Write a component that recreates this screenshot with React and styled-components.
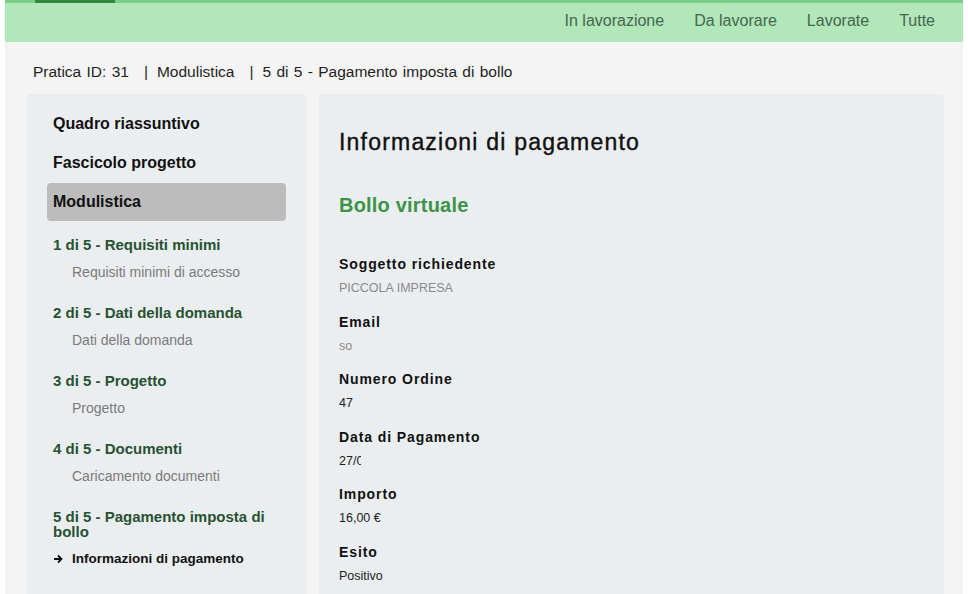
import React from "react";
import styled, { createGlobalStyle } from "styled-components";

const GlobalStyle = createGlobalStyle`
  html, body {
    margin: 0;
    padding: 0;
    background: #fff;
  }
  body {
    font-family: "Liberation Sans", Arial, sans-serif;
    color: #1d1d1d;
  }
`;

const Page = styled.div`
  margin: 0 5px;
  min-height: 100vh;
  background: #f4f4f4;
`;

const Header = styled.header`
  position: relative;
  height: 39px;
  border-top: 3px solid #79d089;
  background: #b1e7b9;
  display: flex;
  align-items: center;
  justify-content: flex-end;
  gap: 30px;
  padding-right: 28px;

  &::before {
    content: "";
    position: absolute;
    top: -3px;
    left: 30px;
    width: 80px;
    height: 3px;
    background: #2f8a3d;
  }
`;

const NavLink = styled.a`
  font-size: 16px;
  color: #466650;
  text-decoration: none;
  cursor: pointer;
  margin-top: -3px;
`;

const Breadcrumb = styled.div`
  padding: 21px 28px 13px;
  font-size: 15.5px;
  color: #1f1f1f;
  display: flex;
  line-height: 18px;
  word-spacing: 1px;

  span + span::before {
    content: "|";
    margin: 0 9px 0 15px;
  }
`;

const Layout = styled.div`
  display: grid;
  grid-template-columns: 279px 625px;
  gap: 13px;
  padding-left: 22px;
  align-items: start;
`;

const Card = styled.div`
  background: #ebeef0;
  border-radius: 4px 4px 0 0;
  min-height: 520px;
`;

const Sidebar = styled(Card)`
  padding: 11px 20px 30px 20px;
`;

const TopItem = styled.div`
  font-size: 16px;
  font-weight: 700;
  color: #111;
  height: 38px;
  line-height: 38px;
  padding: 0 6px;
  border-radius: 4px;
  margin-bottom: 1px;
  background: ${(p) => (p.$active ? "#bcbcbc" : "transparent")};
`;

const Step = styled.div`
  margin-top: ${(p) => (p.$first ? "16px" : "25px")};
  padding: 0 6px;
`;

const StepTitle = styled.div`
  font-size: 15px;
  font-weight: 700;
  color: #275232;
  line-height: 15px;
  padding-right: 8px;
`;

const StepSub = styled.div`
  font-size: 14px;
  color: #7a7a7a;
  margin-top: 13px;
  padding-left: 19px;
  line-height: 15px;
`;

const CurrentSub = styled.div`
  font-size: 13.5px;
  font-weight: 700;
  color: #111;
  margin-top: 12px;
  line-height: 15px;
  display: flex;
  align-items: center;
  gap: 9px;
`;

const Main = styled(Card)`
  padding: 30px 20px 30px 20px;
`;

const Title = styled.h1`
  margin: 0;
  font-size: 23px;
  font-weight: 400;
  color: #111;
  line-height: 36px;
  letter-spacing: 1.2px;
  -webkit-text-stroke: 0.4px #111;
`;

const Subtitle = styled.h2`
  margin: 32px 0 0;
  font-size: 20px;
  font-weight: 700;
  color: #3d9348;
  line-height: 26px;
  letter-spacing: 0.2px;
`;

const Fields = styled.div`
  margin-top: 37px;
  display: flex;
  flex-direction: column;
  gap: 14.5px;
`;

const Field = styled.div`
  display: flex;
  flex-direction: column;
  gap: 6px;
`;

const Label = styled.div`
  font-size: 14px;
  font-weight: 700;
  color: #111;
  line-height: 18px;
  letter-spacing: 0.9px;
`;

const Value = styled.div`
  font-size: 12.5px;
  line-height: 19px;
  color: ${(p) => (p.$muted ? "#8a8a8a" : "#222")};
  max-width: ${(p) => p.$clip || "none"};
  overflow: hidden;
  white-space: nowrap;
`;

const Arrow = () => (
  <svg width="10" height="10" viewBox="0 0 10 10">
    <path d="M1 5h7M5 1.5 8.5 5 5 8.5" fill="none" stroke="#111" strokeWidth="1.8" />
  </svg>
);

const steps = [
  { title: "1 di 5 - Requisiti minimi", sub: "Requisiti minimi di accesso" },
  { title: "2 di 5 - Dati della domanda", sub: "Dati della domanda" },
  { title: "3 di 5 - Progetto", sub: "Progetto" },
  { title: "4 di 5 - Documenti", sub: "Caricamento documenti" },
];

const fields = [
  { label: "Soggetto richiedente", value: "PICCOLA IMPRESA", muted: true },
  { label: "Email", value: "so", muted: true },
  { label: "Numero Ordine", value: "47" },
  { label: "Data di Pagamento", value: "27/02/2024", clip: "22px" },
  { label: "Importo", value: "16,00 €" },
  { label: "Esito", value: "Positivo" },
];

export default function App() {
  return (
    <>
      <GlobalStyle />
      <Page>
        <Header>
          <NavLink>In lavorazione</NavLink>
          <NavLink>Da lavorare</NavLink>
          <NavLink>Lavorate</NavLink>
          <NavLink>Tutte</NavLink>
        </Header>
        <Breadcrumb>
          <span>Pratica ID: 31</span>
          <span>Modulistica</span>
          <span>5 di 5 - Pagamento imposta di bollo</span>
        </Breadcrumb>
        <Layout>
          <Sidebar>
            <TopItem>Quadro riassuntivo</TopItem>
            <TopItem>Fascicolo progetto</TopItem>
            <TopItem $active>Modulistica</TopItem>
            {steps.map((s, i) => (
              <Step key={s.title} $first={i === 0}>
                <StepTitle>{s.title}</StepTitle>
                <StepSub>{s.sub}</StepSub>
              </Step>
            ))}
            <Step>
              <StepTitle>5 di 5 - Pagamento imposta di bollo</StepTitle>
              <CurrentSub>
                <Arrow />
                Informazioni di pagamento
              </CurrentSub>
            </Step>
          </Sidebar>
          <Main>
            <Title>Informazioni di pagamento</Title>
            <Subtitle>Bollo virtuale</Subtitle>
            <Fields>
              {fields.map((f) => (
                <Field key={f.label}>
                  <Label>{f.label}</Label>
                  <Value $muted={f.muted} $clip={f.clip}>
                    {f.value}
                  </Value>
                </Field>
              ))}
            </Fields>
          </Main>
        </Layout>
      </Page>
    </>
  );
}
